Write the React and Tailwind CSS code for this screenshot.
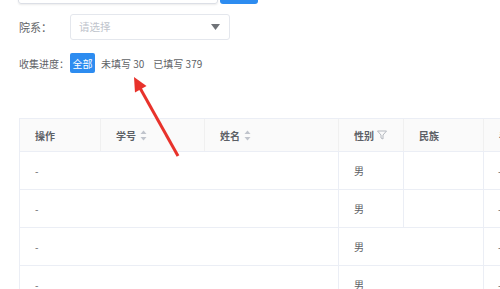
import React from 'react';

const cols = ['w-[81px]', 'w-[104px]', 'w-[134px]', 'w-[65px]', 'w-[80px]', 'w-[100px]'];

const SortIcon = () => (
  <svg width="7" height="11" viewBox="0 0 7 11" className="ml-[4px]">
    <path d="M3.5 0.5 L6.5 4 L0.5 4 Z" fill="#c0c4cc" />
    <path d="M3.5 10.5 L6.5 7 L0.5 7 Z" fill="#c0c4cc" />
  </svg>
);

const FilterIcon = () => (
  <svg width="10" height="10" viewBox="0 0 10 10" className="ml-[3px]">
    <path d="M0.5 1 H9.5 L6 5 V9 L4 8 V5 Z" fill="none" stroke="#b4b8bf" strokeWidth="1" />
  </svg>
);

const rows = [
  { sep: true },
  { sep: true },
  { sep: false },
  { sep: false },
];

export default function App() {
  return (
    <div className="relative w-[500px] h-[289px] overflow-hidden bg-white text-[#606266] font-['Noto_Sans_CJK_SC','Noto_Sans',sans-serif]">
      {/* top search bar remnant */}
      <div className="flex items-end h-[4px] pl-[18px]">
        <div className="w-[200px] h-[10px] border border-[#dcdfe6] rounded-[3px] shadow-[0_1px_2px_rgba(0,0,0,0.08)]" />
        <div className="ml-[2px] w-[38px] h-[10px] bg-[#2d8cf0] rounded-[3px]" />
      </div>

      <div className="pl-[19px]">
        {/* 院系 */}
        <div className="flex items-center mt-[10px]">
          <span className="w-[51px] text-[11px] whitespace-nowrap">院系：</span>
          <div className="flex items-center justify-between w-[160px] h-[26px] border border-[#e4e7ed] rounded-[3px] px-[8px]">
            <span className="text-[10.5px] text-[#c0c4cc]">请选择</span>
            <svg width="9" height="6" viewBox="0 0 9 6" className="mr-[1px]">
              <path d="M0 0 H9 L4.5 6 Z" fill="#707378" />
            </svg>
          </div>
        </div>

        {/* 收集进度 */}
        <div className="flex items-center mt-[13px] h-[20px] text-[10px] whitespace-nowrap">
          <span className="w-[51px]">收集进度：</span>
          <span className="w-[25px] h-[20px] flex items-center justify-center bg-[#2d8cf0] text-white rounded-[2px]">全部</span>
          <span className="ml-[6px]">未填写 30</span>
          <span className="ml-[9px]">已填写 379</span>
        </div>

        {/* table */}
        <div className="mt-[45px] w-[600px] border-l border-t border-[#ebeef5] text-[10px]">
          <div className="flex h-[33px] bg-[#fafafa] border-b border-[#ebeef5] font-semibold text-[#5d6066]">
            <div className={`${cols[0]} flex items-center pl-[15px] border-r border-[#f0f0f0]`}>操作</div>
            <div className={`${cols[1]} flex items-center pl-[15px] border-r border-[#f0f0f0]`}>学号<SortIcon /></div>
            <div className={`${cols[2]} flex items-center pl-[15px] border-r border-[#f0f0f0]`}>姓名<SortIcon /></div>
            <div className={`${cols[3]} flex items-center pl-[15px] border-r border-[#f0f0f0]`}>性别<FilterIcon /></div>
            <div className={`${cols[4]} flex items-center pl-[15px] border-r border-[#f0f0f0]`}>民族</div>
            <div className={`${cols[5]} flex items-center pl-[15px]`}>手机号</div>
          </div>
          {rows.map((r, i) => (
            <div key={i} className="flex h-[38px] border-b border-[#ebeef5]">
              <div className={`${cols[0]} flex items-center pl-[15px]`}>-</div>
              <div className={cols[1]} />
              <div className={`${cols[2]} border-r border-[#ebeef5]`} />
              <div className={`${cols[3]} flex items-center pl-[15px] ${r.sep ? 'border-r border-[#ebeef5]' : 'border-r border-transparent'}`}>男</div>
              <div className={`${cols[4]} border-r border-[#ebeef5]`} />
              <div className={`${cols[5]} flex items-center pl-[14px]`}>-</div>
            </div>
          ))}
        </div>
      </div>

      {/* red arrow annotation */}
      <svg className="absolute left-0 top-0 pointer-events-none" width="500" height="289">
        <line x1="178" y1="156" x2="140" y2="88" stroke="#e8322b" strokeWidth="3" />
        <path d="M134 77 L146.5 86 L135 92.5 Z" fill="#e8322b" />
      </svg>
    </div>
  );
}
